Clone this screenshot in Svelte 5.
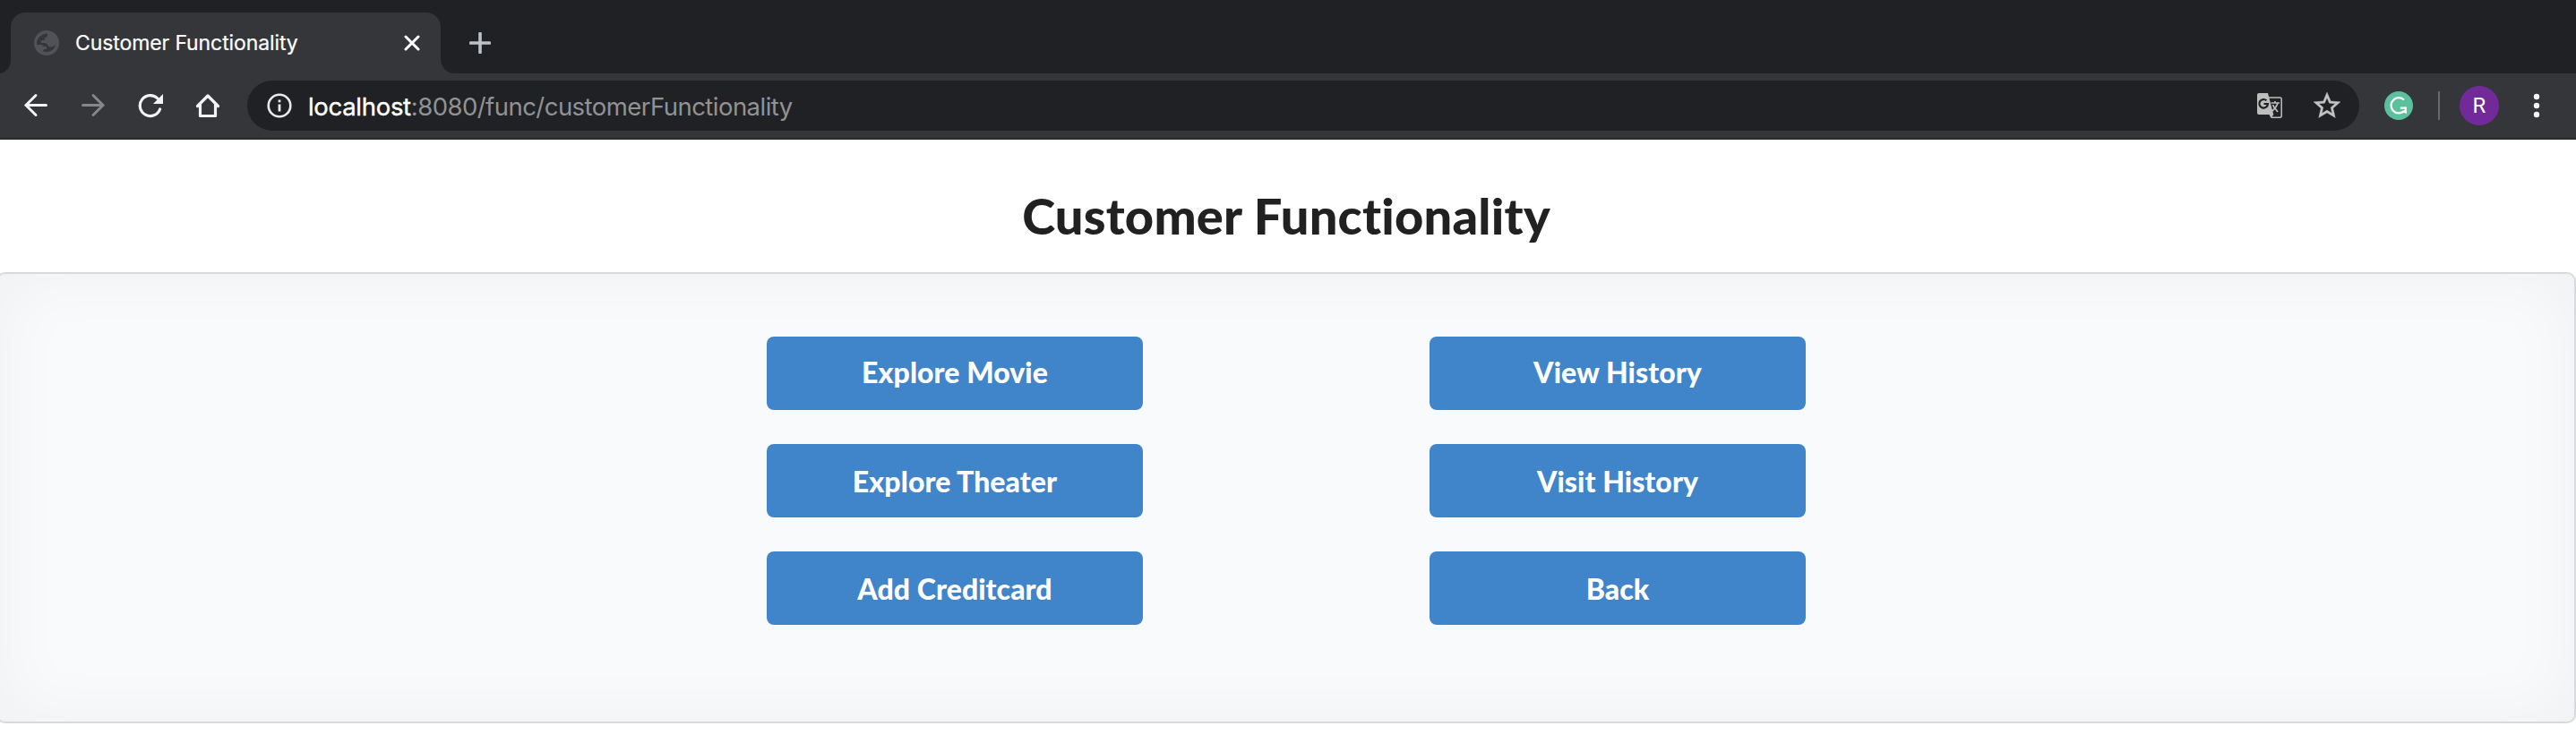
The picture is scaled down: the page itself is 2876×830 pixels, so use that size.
<script>
  const columns = [
    ['Explore Movie', 'Explore Theater', 'Add Creditcard'],
    ['View History', 'Visit History', 'Back']
  ];
</script>

<div class="window">
  <div class="strip">
    <svg class="flare" viewBox="0 0 12 16"><path d="M0 16h12V0C12 9 7 15 0 16z" fill="#35363a" /></svg>
    <div class="tab">
      <svg class="globe" viewBox="0 0 28 28"><circle cx="14" cy="14" r="14" fill="#505257" /><path d="M3 14h8c3 0 4 1 5 4 3 1 6 0 8-2-1 5-5 8-10 8-2 0-3 0-4-1l1-2h3v-3h-2c-2 0-3-1-3-2H3zM3 13C4 8 8 4 15 3.500v2C15 7 14 8 12 8v3H9c-1 0-1 1-1 3H3z" fill="#35363a" /></svg>
      <span class="title">Customer Functionality</span>
      <svg class="close" viewBox="0 0 18 18"><path d="M2 2l14 14M16 2L2 16" stroke="#fff" stroke-width="3" stroke-linecap="round" /></svg>
    </div>
    <svg class="flare-right" viewBox="0 0 16 16"><path d="M0 16h16C7 16 0 9 0 0z" fill="#35363a" /></svg>
    <svg class="plus" viewBox="0 0 24 24"><path d="M12 1.500v21M1.500 12h21" stroke="#bdc1c6" stroke-width="3.600" stroke-linecap="round" /></svg>
  </div>
  <div class="toolbar">
    <svg class="nav" viewBox="0 0 28 28"><path d="M25.500 13.500H3M14 2.500L3 13.500l11 11" fill="none" stroke="#f1f3f4" stroke-width="3" stroke-linecap="round" /></svg>
    <svg class="nav" viewBox="0 0 28 28"><path d="M2.500 13.500H25M14 2.500l11 11-11 11" fill="none" stroke="#86878a" stroke-width="3" stroke-linecap="round" /></svg>
    <svg class="nav" viewBox="0 0 28 28"><path d="M24.600 18A11.500 11.500 0 1 1 22 6" fill="none" stroke="#f1f3f4" stroke-width="3.200" stroke-linecap="round" /><path d="M28 1v11H17z" fill="#f1f3f4" /></svg>
    <svg class="nav" viewBox="0 0 28 28"><path d="M2.500 14.500L14 3l11.500 11.500M5.500 12.500v13h17v-13" fill="none" stroke="#f1f3f4" stroke-width="3.200" stroke-linecap="round" stroke-linejoin="round" /></svg>
    <div class="omnibox">
      <svg class="info" viewBox="0 0 28 28"><circle cx="14" cy="14" r="12.300" fill="none" stroke="#e8eaed" stroke-width="2.600" /><path d="M14 12.500v8M14 7.500v2.800" stroke="#e8eaed" stroke-width="2.800" /></svg>
      <span class="url"><b>localhost</b>:8080/func/customerFunctionality</span>
      <svg class="translate" viewBox="0 0 28 28"><path d="M13 5h12.500q1.700 0 1.700 1.700v18.600q0 1.900-1.700 1.900H16" fill="none" stroke="#bdbdbd" stroke-width="1.500" /><path d="M2 0h10l6.300 24H2q-2 0-2-2V2q0-2 2-2z" fill="#bdbdbd" /><path d="M13.500 24h4.800L15.500 28z" fill="#bdbdbd" /><path d="M10.500 8.300A4.800 4.800 0 1 0 12 12H7.500" fill="none" stroke="#202124" stroke-width="2.200" /><path d="M15.500 11H25M20 9v2M23 11c-1 4-4 7-6 9M17.500 13c1 3 3.500 5 5.500 8" fill="none" stroke="#bdbdbd" stroke-width="1.700" /></svg>
      <svg class="star" viewBox="0 0 24 24"><path d="M22 9.240l-7.190-.620L12 2 9.190 8.630 2 9.240l5.460 4.730L5.820 21 12 17.270 18.180 21l-1.630-7.030L22 9.240zM12 15.400l-3.760 2.270 1-4.280-3.320-2.880 4.380-.380L12 6.100l1.710 4.040 4.380.380-3.320 2.880 1 4.280L12 15.400z" fill="#c4c4c4" stroke="#c4c4c4" stroke-width=".25" /></svg>
    </div>
    <svg class="grammar" viewBox="0 0 32 32"><circle cx="16" cy="16" r="16" fill="#5bc19d" /><path d="M22 9.500A8.600 8.600 0 1 0 21.500 22.500M17.800 18.600h6" fill="none" stroke="#fff" stroke-width="2.300" /><path d="M24.900 17.500v7.400l-6-2.400 3.600-1.300.6-3.700z" fill="#fff" /></svg>
    <div class="rule"></div>
    <div class="avatar">R</div>
    <svg class="dots" viewBox="0 0 8 28"><circle cx="4" cy="4" r="3.200" /><circle cx="4" cy="14" r="3.200" /><circle cx="4" cy="24" r="3.200" /></svg>
  </div>
  <main>
    <h1>Customer Functionality</h1>
    <section>
      {#each columns as column}
        <div class="column">
          {#each column as label}<button>{label}</button>{/each}
        </div>
      {/each}
    </section>
  </main>
</div>

<style>
  :global(body) { background: #fff; }
  .window { width: 2876px; height: 830px; overflow: hidden; font-family: Inter, sans-serif; }
  svg { display: block; flex: none; }
  .strip { display: flex; height: 82px; background: #202124; }
  .flare { width: 12px; height: 16px; align-self: flex-end; }
  .flare-right { width: 16px; height: 16px; align-self: flex-end; }
  .tab { box-sizing: border-box; width: 480px; height: 68px; margin-top: 14px; padding: 0 23px 0 26px; border-radius: 16px 16px 0 0; background: #35363a; display: flex; align-items: center; }
  .globe { width: 28px; height: 28px; }
  .title { flex: 1; margin-left: 18px; font-size: 23px; line-height: 30px; letter-spacing: -.1px; -webkit-text-stroke: .2px #fff; color: #fff; white-space: nowrap; }
  .close { width: 18px; height: 18px; }
  .plus { width: 24px; height: 24px; margin: 36px 0 0 16px; }
  .toolbar { box-sizing: border-box; height: 74px; padding: 0 40px 0 26px; border-bottom: 2px solid #292a2d; background: #35363a; display: flex; align-items: center; }
  .nav { width: 28px; height: 28px; margin-right: 36px; }
  .omnibox { box-sizing: border-box; width: 2358px; height: 56px; margin-left: -6px; padding: 0 18px 0 22px; border-radius: 28px; background: #202124; display: flex; align-items: center; }
  .info { width: 28px; height: 28px; }
  .url { flex: 1; margin-left: 18px; padding-top: 2px; font-size: 27.500px; line-height: 34px; letter-spacing: -.54px; color: #919294; white-space: nowrap; }
  .url b { font-weight: 400; color: #fff; -webkit-text-stroke: .4px #fff; letter-spacing: -.3px; }
  .translate { width: 28px; height: 28px; }
  .star { width: 36px; height: 36px; margin-left: 32px; }
  .grammar { width: 32px; height: 32px; margin-left: 28px; }
  .rule { width: 2px; height: 32px; margin-left: 28px; background: #68696c; }
  .avatar { width: 44px; height: 44px; margin-left: 22px; border-radius: 50%; background: #722a9b; color: #fff; font: 24px/45px Roboto, sans-serif; text-align: center; }
  .dots { width: 8px; height: 28px; margin-left: 38px; fill: #f1f3f4; }
  main { width: 2880px; margin-left: -4px; font-family: Lato, sans-serif; font-variant-ligatures: none; }
  h1 { margin: 0; height: 148px; font-size: 56px; line-height: 170px; font-weight: 900; letter-spacing: .2px; color: #212121; text-align: center; }
  section { box-sizing: border-box; height: 504px; padding-top: 70px; border: 2px solid #d8d9dc; border-radius: 10px; background: #f9fafc; box-shadow: inset 0 0 80px rgba(0, 0, 0, .045); display: flex; justify-content: center; gap: 320px; }
  .column { display: flex; flex-direction: column; gap: 38px; }
  button { box-sizing: border-box; width: 420px; height: 82px; padding: 2px 0 0; border: 0; border-radius: 8px; background: #4085ca; color: #fff; font: 900 32px/40px Lato, sans-serif; letter-spacing: .06px; font-variant-ligatures: none; }
  button:first-child { padding: 0 0 2px; }
</style>
